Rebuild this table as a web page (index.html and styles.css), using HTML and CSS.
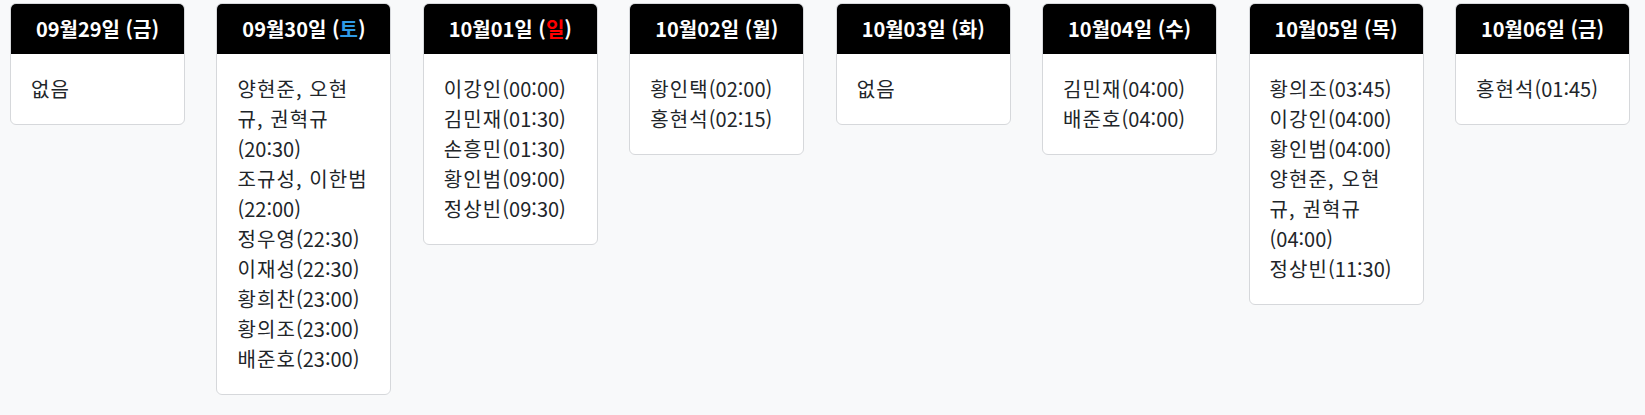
FILE: index.html
```html
<!DOCTYPE html>
<html lang="ko">
<head>
<meta charset="utf-8">
<title>일정</title>
<link rel="stylesheet" href="styles.css">
</head>
<body>
<div class="week">
  <div class="day">
    <div class="day-head">09월29일 (금)</div>
    <div class="day-body"><div><span class="name">없음</span></div></div>
  </div>
  <div class="day">
    <div class="day-head">09월30일 (<span class="sat">토</span>)</div>
    <div class="day-body">
      <div><span class="name">양현준, 오현규, 권혁규</span><span class="time">(20:30)</span></div>
      <div><span class="name">조규성, 이한범</span><span class="time">(22:00)</span></div>
      <div><span class="name">정우영</span><span class="time">(22:30)</span></div>
      <div><span class="name">이재성</span><span class="time">(22:30)</span></div>
      <div><span class="name">황희찬</span><span class="time">(23:00)</span></div>
      <div><span class="name">황의조</span><span class="time">(23:00)</span></div>
      <div><span class="name">배준호</span><span class="time">(23:00)</span></div>
    </div>
  </div>
  <div class="day">
    <div class="day-head">10월01일 (<span class="sun">일</span>)</div>
    <div class="day-body">
      <div><span class="name">이강인</span><span class="time">(00:00)</span></div>
      <div><span class="name">김민재</span><span class="time">(01:30)</span></div>
      <div><span class="name">손흥민</span><span class="time">(01:30)</span></div>
      <div><span class="name">황인범</span><span class="time">(09:00)</span></div>
      <div><span class="name">정상빈</span><span class="time">(09:30)</span></div>
    </div>
  </div>
  <div class="day">
    <div class="day-head">10월02일 (월)</div>
    <div class="day-body">
      <div><span class="name">황인택</span><span class="time">(02:00)</span></div>
      <div><span class="name">홍현석</span><span class="time">(02:15)</span></div>
    </div>
  </div>
  <div class="day">
    <div class="day-head">10월03일 (화)</div>
    <div class="day-body"><div><span class="name">없음</span></div></div>
  </div>
  <div class="day">
    <div class="day-head">10월04일 (수)</div>
    <div class="day-body">
      <div><span class="name">김민재</span><span class="time">(04:00)</span></div>
      <div><span class="name">배준호</span><span class="time">(04:00)</span></div>
    </div>
  </div>
  <div class="day">
    <div class="day-head">10월05일 (목)</div>
    <div class="day-body">
      <div><span class="name">황의조</span><span class="time">(03:45)</span></div>
      <div><span class="name">이강인</span><span class="time">(04:00)</span></div>
      <div><span class="name">황인범</span><span class="time">(04:00)</span></div>
      <div><span class="name">양현준, 오현규, 권혁규</span><span class="time">(04:00)</span></div>
      <div><span class="name">정상빈</span><span class="time">(11:30)</span></div>
    </div>
  </div>
  <div class="day">
    <div class="day-head">10월06일 (금)</div>
    <div class="day-body">
      <div><span class="name">홍현석</span><span class="time">(01:45)</span></div>
    </div>
  </div>
</div>
</body>
</html>
```

FILE: styles.css
```css
html, body {
  margin: 0;
  padding: 0;
  background: #f8f9fa;
}

body {
  font-family: "Noto Sans CJK KR", "Noto Sans", sans-serif;
  font-size: 20px;
  line-height: 30px;
  color: #212529;
}

.week {
  display: flex;
  align-items: flex-start;
  justify-content: space-between;
  padding: 3px 15px 0 10px;
}

.day {
  width: 175px;
  box-sizing: border-box;
  background: #fff;
  border: 1px solid #d6d8db;
  border-radius: 6px;
  overflow: hidden;
}

.day-head {
  background: #000;
  color: #fff;
  font-weight: 600;
  text-align: center;
  padding: 10px 0 10px;
  line-height: 30px;
}

.sat {
  color: #2f9ae8;
}

.sun {
  color: #ff0000;
}

.day-body {
  padding: 20px 20px;
  font-weight: 400;
}

.name {
  letter-spacing: 1.1px;
}

.time {
  letter-spacing: 0;
}
```
